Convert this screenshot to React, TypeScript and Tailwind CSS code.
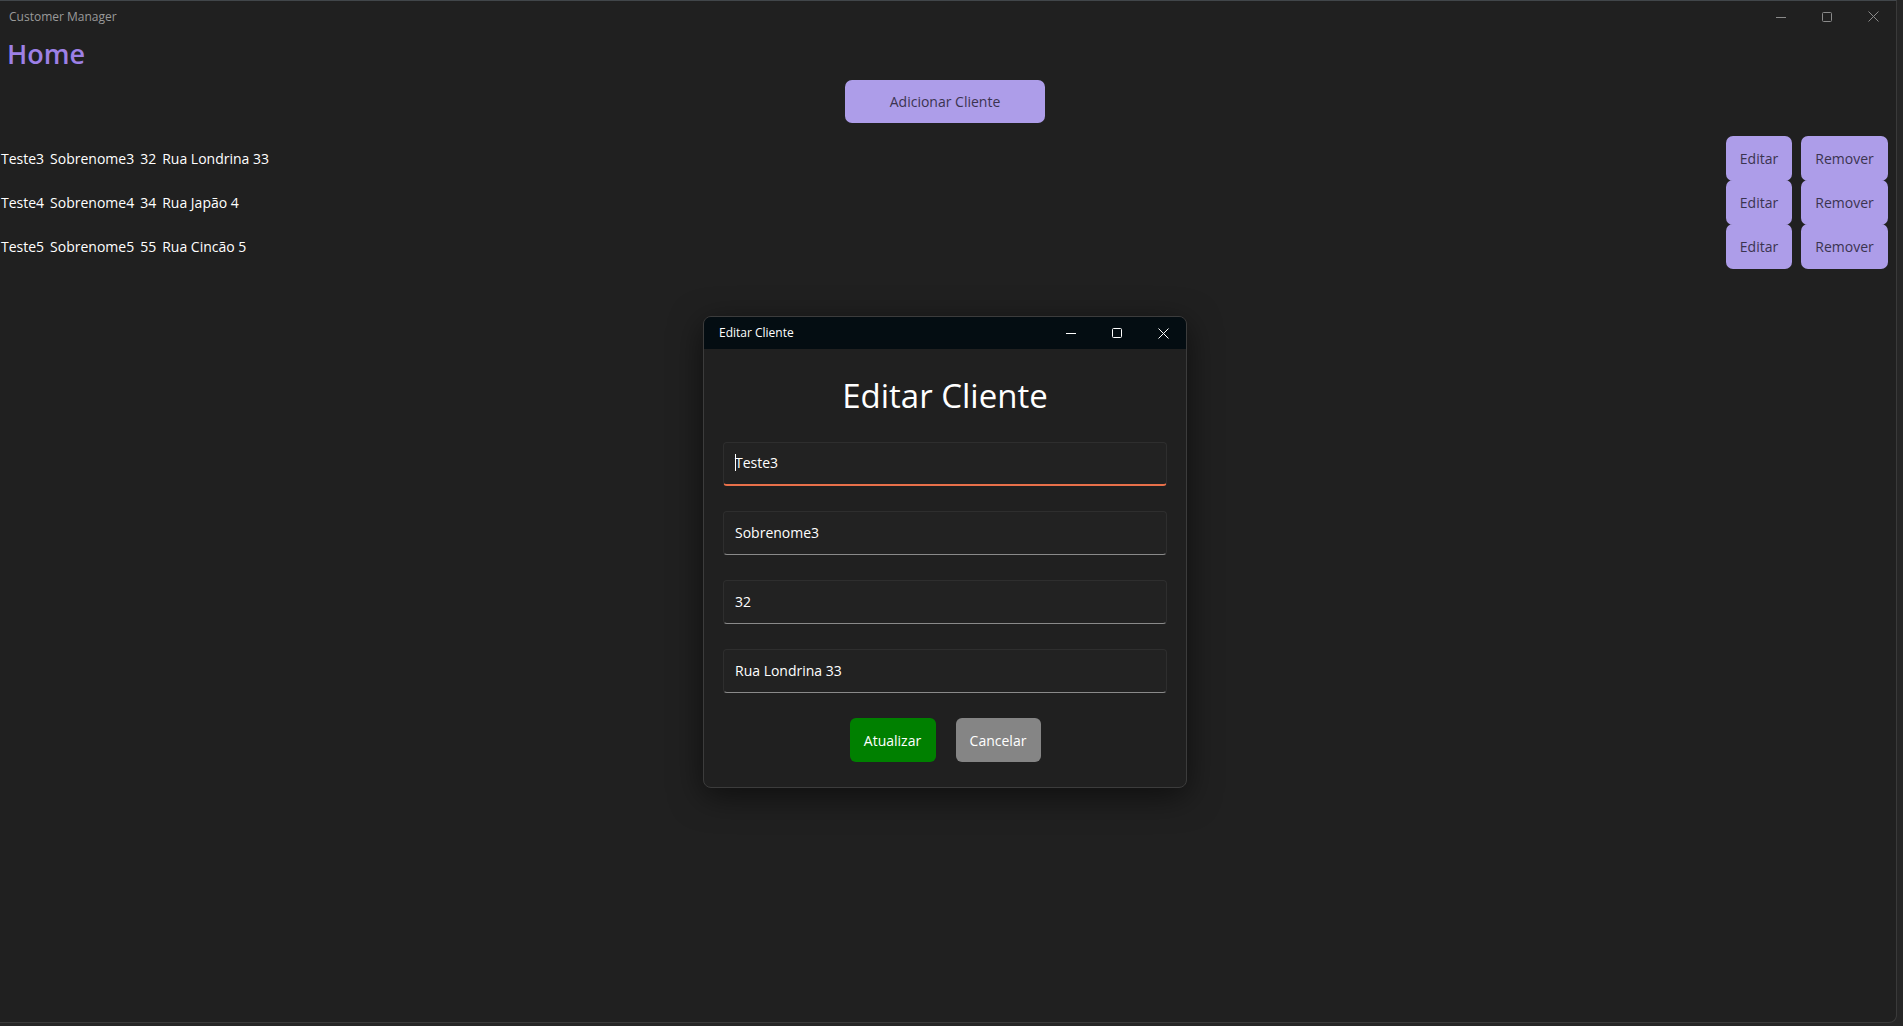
import type { ReactNode } from "react";

type Customer = {
  nome: string;
  sobrenome: string;
  idade: number;
  endereco: string;
};

const CUSTOMERS: Customer[] = [
  { nome: "Teste3", sobrenome: "Sobrenome3", idade: 32, endereco: "Rua Londrina 33" },
  { nome: "Teste4", sobrenome: "Sobrenome4", idade: 34, endereco: "Rua Japão 4" },
  { nome: "Teste5", sobrenome: "Sobrenome5", idade: 55, endereco: "Rua Cincão 5" },
];

function CaptionButtons({ color }: { color: string }) {
  return (
    <div className="flex h-full">
      <button className="flex h-full w-[46px] items-center justify-center">
        <svg width="10" height="10" viewBox="0 0 10 10" fill="none" stroke={color} strokeWidth="1">
          <path d="M0 5.5h10" />
        </svg>
      </button>
      <button className="flex h-full w-[46px] items-center justify-center">
        <svg width="10" height="10" viewBox="0 0 10 10" fill="none" stroke={color} strokeWidth="1">
          <rect x="0.5" y="0.5" width="9" height="9" rx="1" />
        </svg>
      </button>
      <button className="flex h-full w-[46px] items-center justify-center">
        <svg width="11" height="11" viewBox="0 0 11 11" fill="none" stroke={color} strokeWidth="1">
          <path d="M0.5 0.5l10 10M10.5 0.5l-10 10" />
        </svg>
      </button>
    </div>
  );
}

function TextField({ value, focused }: { value: string; focused?: boolean }) {
  return (
    <div
      className={
        focused
          ? "flex h-[44px] items-center rounded-[4px] border border-[#2e2e2e] border-b-2 border-b-[#e8704a] bg-[#222222] px-[11px] pb-[2px] text-[14px] text-white"
          : "flex h-[44px] items-center rounded-[4px] border border-[#2e2e2e] border-b-[#8a8a8a] bg-[#222222] px-[11px] pb-[2px] text-[14px] text-white"
      }
    >
      {focused && <span className="mr-[-1px] h-[17px] w-px bg-white" />}
      <span>{value}</span>
    </div>
  );
}

function PurpleButton({ children, className }: { children: ReactNode; className: string }) {
  return (
    <button
      className={`flex items-center justify-center rounded-[7px] bg-[#ad9de9] text-[14px] text-[#3b3450] ${className}`}
    >
      {children}
    </button>
  );
}

export default function App() {
  const editing = CUSTOMERS[0];

  return (
    <div
      className="relative h-[1026px] w-[1903px] overflow-hidden bg-[#262626]"
      style={{ fontFamily: '"Open Sans", "Noto Sans", sans-serif' }}
    >
      <div className="flex h-[1023px] w-[1897px] flex-col overflow-hidden rounded-br-[8px] border-t border-r border-b border-t-[#41464a] border-r-[#3a3a3a] border-b-[#3a3a3a] bg-[#202020]">
        <div className="flex h-[31px] shrink-0 items-center justify-between">
          <span className="pl-[9px] text-[12px] text-[#9a9a9a]">Customer Manager</span>
          <CaptionButtons color="#8a8a8a" />
        </div>

        <h1 className="pl-[7px] text-[27px] leading-[44px] font-semibold text-[#9d80e6]">Home</h1>

        <div className="mt-[4px] flex justify-center pr-[6px]">
          <PurpleButton className="h-[43px] w-[200px]">Adicionar Cliente</PurpleButton>
        </div>

        <div className="mt-[13px] flex flex-col">
          {CUSTOMERS.map((c) => (
            <div key={c.nome} className="flex h-[44px] items-center justify-between pr-[8px]">
              <div className="flex gap-[6px] pl-[1px] text-[14px] text-white">
                <span>{c.nome}</span>
                <span>{c.sobrenome}</span>
                <span>{c.idade}</span>
                <span>{c.endereco}</span>
              </div>
              <div className="flex gap-[9px]">
                <PurpleButton className="h-[45px] w-[66px]">Editar</PurpleButton>
                <PurpleButton className="h-[45px] w-[87px]">Remover</PurpleButton>
              </div>
            </div>
          ))}
        </div>
      </div>

      <div className="absolute top-[316px] left-[703px] flex w-[484px] flex-col overflow-hidden rounded-[8px] border border-[#3c3c3c] bg-[#202020] shadow-[0_8px_32px_rgba(0,0,0,0.55)]">
        <div className="flex h-[32px] items-center justify-between bg-[#040d12]">
          <span className="pl-[15px] text-[12px] text-white">Editar Cliente</span>
          <CaptionButtons color="#ffffff" />
        </div>

        <div className="flex flex-col px-[19px] pt-[25px] pb-[25px]">
          <h2 className="text-center text-[33px] leading-[44px] font-medium text-white">Editar Cliente</h2>

          <div className="mt-[24px] flex flex-col gap-[25px]">
            <TextField value={editing.nome} focused />
            <TextField value={editing.sobrenome} />
            <TextField value={String(editing.idade)} />
            <TextField value={editing.endereco} />
          </div>

          <div className="mt-[25px] flex justify-center gap-[20px]">
            <button className="h-[44px] w-[86px] rounded-[6px] bg-[#008000] text-[14px] text-white">
              Atualizar
            </button>
            <button className="h-[44px] w-[85px] rounded-[6px] bg-[#858585] text-[14px] text-white">
              Cancelar
            </button>
          </div>
        </div>
      </div>
    </div>
  );
}
